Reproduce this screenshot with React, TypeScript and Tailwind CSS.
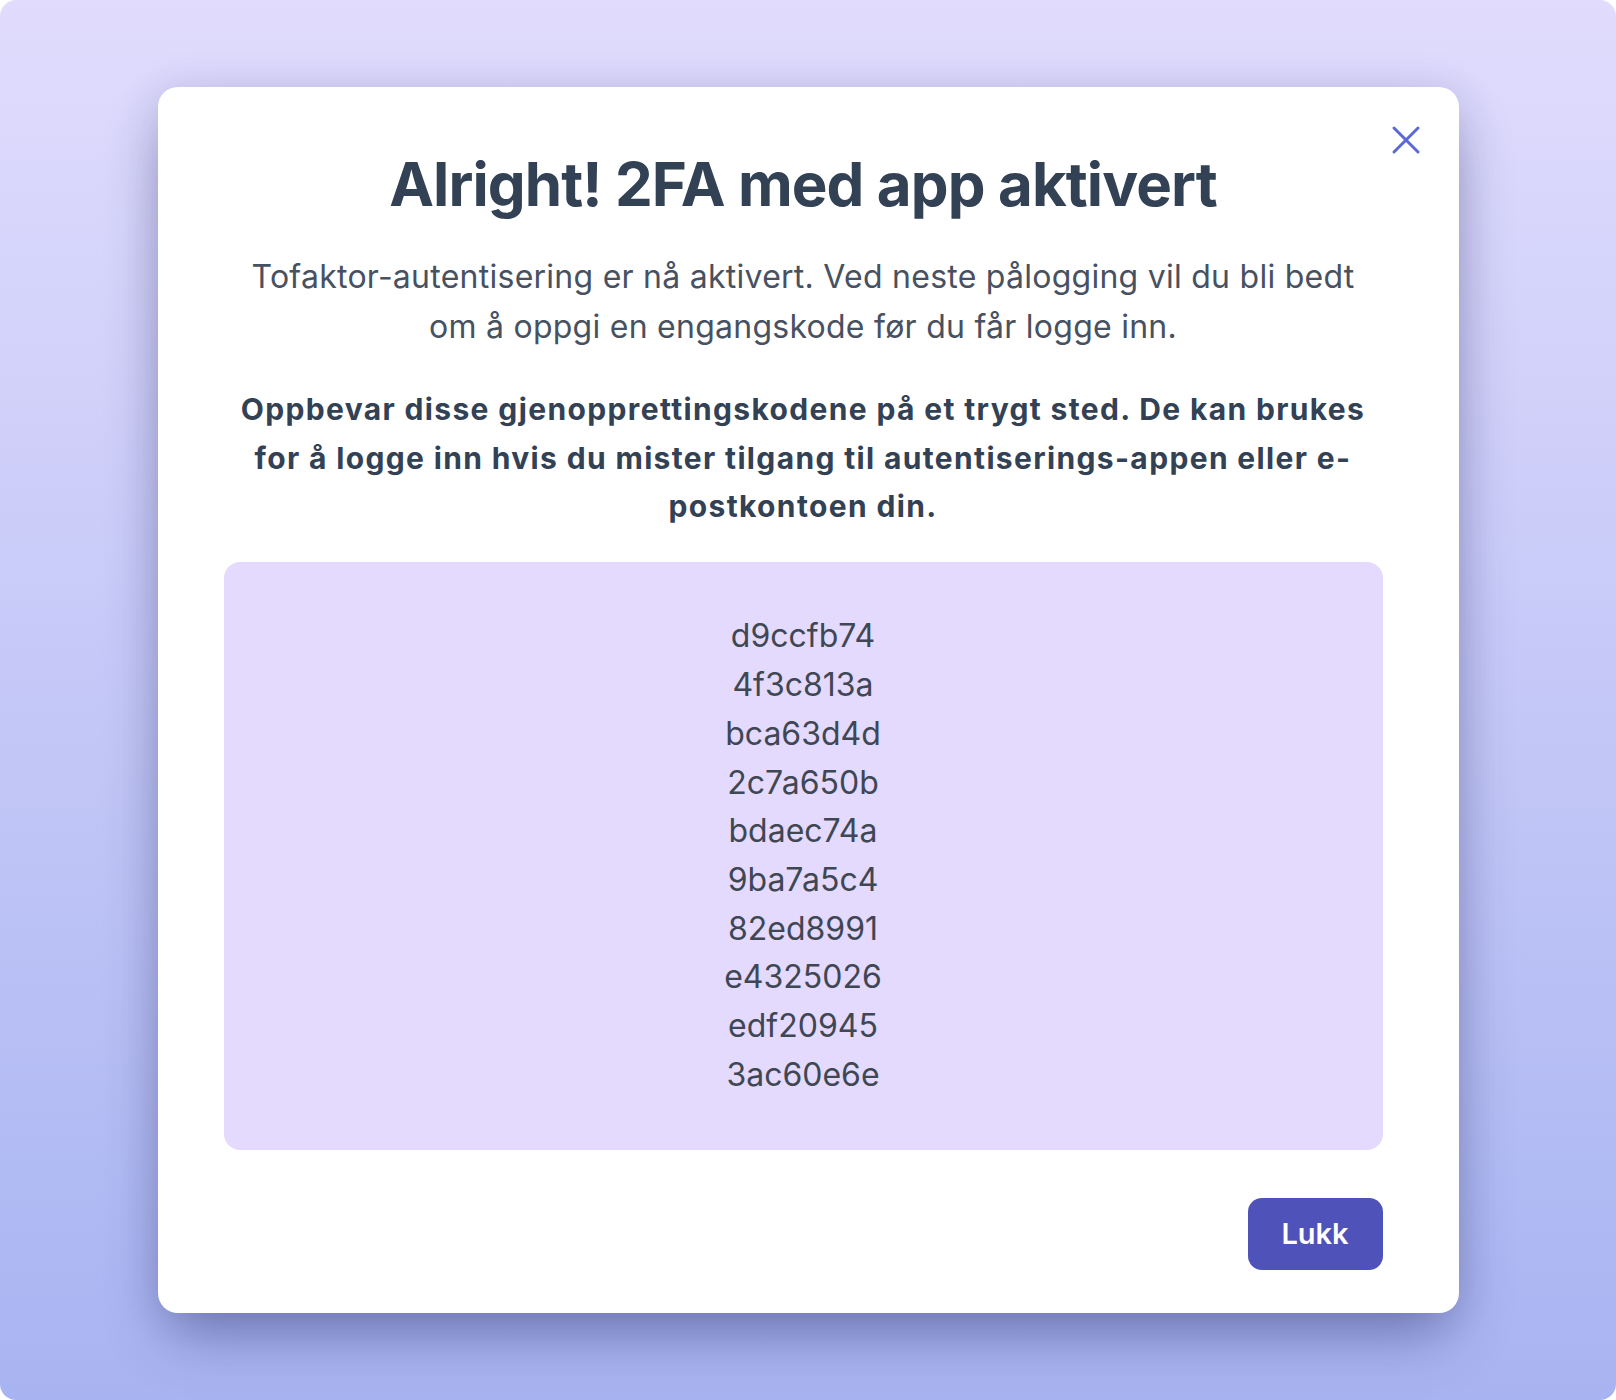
import { useState } from "react";

const codes = [
  "d9ccfb74",
  "4f3c813a",
  "bca63d4d",
  "2c7a650b",
  "bdaec74a",
  "9ba7a5c4",
  "82ed8991",
  "e4325026",
  "edf20945",
  "3ac60e6e",
];

function CloseIcon() {
  return (
    <svg width="32" height="32" viewBox="0 0 32 32" fill="none" aria-hidden>
      <path
        d="M4 4L28 28M28 4L4 28"
        stroke="currentColor"
        strokeWidth="3"
        strokeLinecap="round"
      />
    </svg>
  );
}

export default function App() {
  const [open, setOpen] = useState(true);

  return (
    <div className="flex h-[1400px] w-full items-center justify-center rounded-[16px] bg-gradient-to-b from-[#e1dcfd] to-[#a8b4f1] font-['Inter','Noto_Sans',sans-serif]">
      {open ? (
        <div className="relative flex w-[1301px] flex-col rounded-[20px] bg-white pb-[43px] pl-[66px] pr-[76px] pt-[61px] shadow-[0_30px_60px_-10px_rgba(40,44,100,0.45),0_0_40px_rgba(60,50,120,0.12)]">
          <button
            className="absolute right-[37px] top-[37px] text-[#5a69d6]"
            title="Lukk"
            onClick={() => setOpen(false)}
          >
            <CloseIcon />
          </button>

          <h1 className="text-center text-[60px] font-bold leading-[72px] tracking-[-0.015em] text-[#334155]">
            Alright! 2FA med app aktivert
          </h1>

          <p className="mt-[32px] px-[20px] text-center text-[32px] leading-[50px] tracking-[0.008em] text-[#475161]">
            Tofaktor-autentisering er nå aktivert. Ved neste pålogging vil du
            bli bedt om å oppgi en engangskode før du får logge inn.
          </p>

          <p className="mt-[33px] text-center text-[30px] font-bold leading-[48.5px] tracking-[0.045em] text-[#334155]">
            Oppbevar disse gjenopprettingskodene på et trygt sted. De kan
            brukes for å logge inn hvis du mister tilgang til
            autentiserings-appen eller e-postkontoen din.
          </p>

          <ul className="mt-[31.5px] flex flex-col items-center rounded-[16px] bg-[#e3dafd] py-[50px] text-[32px] leading-[48.7px] text-[#3f4654]">
            {codes.map((code) => (
              <li key={code}>{code}</li>
            ))}
          </ul>

          <div className="mt-[48px] flex justify-end">
            <button
              className="flex h-[72px] w-[135px] items-center justify-center rounded-[14px] bg-[#4f53b9] text-[29px] font-semibold text-white"
              onClick={() => setOpen(false)}
            >
              Lukk
            </button>
          </div>
        </div>
      ) : undefined}
    </div>
  );
}
